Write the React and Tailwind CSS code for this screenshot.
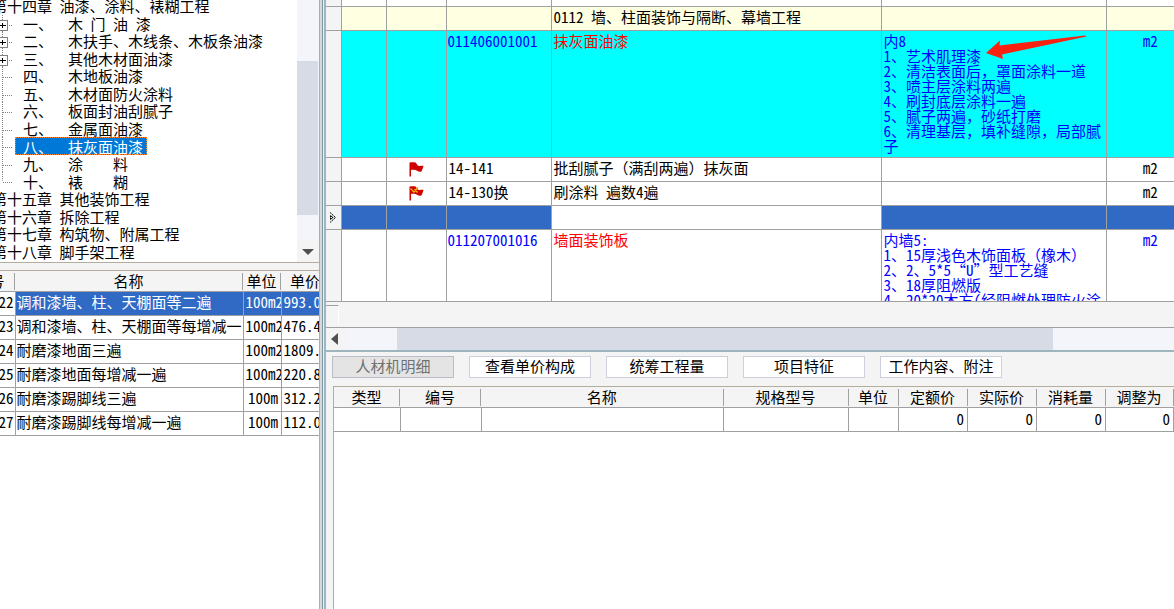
import React from "react";

const tree = [
  { chapter: true, text: "第十四章 油漆、涂料、裱糊工程" },
  { plus: true, text: "一、  木 门 油 漆" },
  { plus: true, text: "二、  木扶手、木线条、木板条油漆" },
  { plus: true, text: "三、  其他木材面油漆" },
  { text: "四、  木地板油漆" },
  { text: "五、  木材面防火涂料" },
  { text: "六、  板面封油刮腻子" },
  { text: "七、  金属面油漆" },
  { selected: true, text: "八、  抹灰面油漆" },
  { text: "九、  涂    料" },
  { last: true, text: "十、  裱    糊" },
  { chapter: true, text: "第十五章 其他装饰工程" },
  { chapter: true, text: "第十六章 拆除工程" },
  { chapter: true, text: "第十七章 构筑物、附属工程" },
  { chapter: true, text: "第十八章 脚手架工程" },
];

const quotas = [
  ["22", "调和漆墙、柱、天棚面等二遍", "100m2", "993.0"],
  ["23", "调和漆墙、柱、天棚面等每增减一", "100m2", "476.4"],
  ["24", "耐磨漆地面三遍", "100m2", "1809."],
  ["25", "耐磨漆地面每增减一遍", "100m2", "220.8"],
  ["26", "耐磨漆踢脚线三遍", "100m", "312.2"],
  ["27", "耐磨漆踢脚线每增减一遍", "100m", "112.0"],
];

const innerWallFeatures = [
  "内8",
  "1、艺术肌理漆",
  "2、清洁表面后，罩面涂料一道",
  "3、喷主层涂料两遍",
  "4、刷封底层涂料一遍",
  "5、腻子两遍，砂纸打磨",
  "6、清理基层，填补缝隙，局部腻子",
];

const panelFeatures = [
  "内墙5:",
  "1、15厚浅色木饰面板（橡木）",
  "2、2、5*5“U”型工艺缝",
  "3、18厚阻燃版",
  "4、20*20木方(经阻燃处理防火涂",
];

const tabs = ["人材机明细", "查看单价构成", "统筹工程量", "项目特征", "工作内容、附注"];

const detailColumns = [
  ["类型", "w-[66px]"],
  ["编号", "w-[81px]"],
  ["名称", ""],
  ["规格型号", "w-[125px]"],
  ["单位", "w-[50px]"],
  ["定额价", "w-[69px]"],
  ["实际价", "w-[69px]"],
  ["消耗量", "w-[69px]"],
  ["调整为", "w-[68px]"],
];

// ASCII runs use the font's half-width glyphs; CJK punctuation stays full width.
function Text({ value }) {
  return value.split(/([\x20-\x7e]+)/).map((part, i) =>
    i % 2 === 1 ? (
      <span key={i} className="[font-feature-settings:'hwid']">
        {part}
      </span>
    ) : (
      part
    ),
  );
}

function TreeRow({ item }) {
  if (item.chapter) {
    return (
      <li className="-ml-2 flex items-center whitespace-pre">
        <button type="button">
          <Text value={item.text} />
        </button>
      </li>
    );
  }
  return (
    <li className="flex items-stretch whitespace-pre">
      <span className="relative w-[15px] shrink-0">
        <svg className="absolute inset-0 h-full w-full" aria-hidden="true">
          <line x1="2.5" y1="0" x2="2.5" y2={item.last ? "50%" : "100%"} stroke="#808080" strokeDasharray="1 1" />
          <line x1="3" y1="10.5" x2="13" y2="10.5" stroke="#808080" strokeDasharray="1 1" />
        </svg>
        {item.plus && (
          <svg className="absolute top-[5px] left-[-2px] h-[11px] w-[10px]" viewBox="0 0 10 11" aria-hidden="true">
            <rect x="-0.5" y="0.5" width="10" height="10" fill="#fff" stroke="#808080" />
            <path d="M2 5.5h6M4.5 3v5" stroke="#000" fill="none" />
          </svg>
        )}
      </span>
      <button
        type="button"
        className={
          item.selected
            ? "flex items-center bg-[#0078d7] pr-[4px] pl-2 text-white outline-1 -outline-offset-1 outline-dotted outline-[#ff8728]"
            : "flex items-center pl-2"
        }
      >
        <span>
          <Text value={item.text} />
        </span>
      </button>
    </li>
  );
}

function Flag({ changed }) {
  return (
    <svg className="mx-auto mt-px h-[15px] w-[15px]" viewBox="0 0 15 15" aria-hidden="true">
      <path d="M.5.500C3 0 5 0 6.500.500 8 1.500 8 3.500 10 4 11.500 4.300 13 3.600 14.500 4 14 6 13 8 12.500 9.500 11 10 9.500 9.800 8.500 9 7 7.800 4 7.200 2 8V14.500H.5Z" fill="#d00000" />
      {changed && <path d="M1.500 2.500 5 6 9 1.500M5.500 3 8.500 6.500" stroke="#ffb400" strokeWidth="1.3" fill="none" />}
    </svg>
  );
}

const line = "border-r border-b border-[#a0a0a0]";
const cell = "border-r border-b border-[#a0a0a0] pr-[2px] pb-[3px] pl-[2px]";
const codeCell = "border-r border-b border-[#a0a0a0] pt-[2px] pl-[1px]";
const gutter = "border-r border-b border-[#a0a0a0] bg-[#f4f4f4]";

function BillTable() {
  return (
    <table className="w-full table-fixed border-collapse text-left">
      <colgroup>
        <col className="w-[15px]" />
        <col className="w-[45px]" />
        <col className="w-[60px]" />
        <col className="w-[105px]" />
        <col />
        <col className="w-[225px]" />
        <col className="w-[68px]" />
      </colgroup>
      <tbody>
        <tr className="h-[6px]">
          <td className={gutter} />
          <td className={line} />
          <td className={line} />
          <td className={line} />
          <td className={line} />
          <td className={line} />
          <td className="border-b border-[#a0a0a0]" />
        </tr>
        <tr className="h-[24px] bg-[#ffffe1]">
          <td className={gutter} />
          <td className={line} />
          <td className={line} />
          <td className={line} />
          <td className={cell}>
            <Text value="0112 墙、柱面装饰与隔断、幕墙工程" />
          </td>
          <td className={line} />
          <td className="border-b border-[#a0a0a0]" />
        </tr>
        <tr className="h-[127px] bg-[#00ffff] align-top text-[#0000ff]">
          <td className={gutter} />
          <td className={line} />
          <td className={line} />
          <td className={codeCell}>
            <Text value="011406001001" />
          </td>
          <td className="border-r border-b border-[#a0a0a0] pt-[2px] pl-[2px] text-[#ff0000]">抹灰面油漆</td>
          <td className="relative border-r border-b border-[#a0a0a0] pt-[2px] pl-[2px]">
            {innerWallFeatures.map((feature) => (
              <p key={feature}>
                <Text value={feature} />
              </p>
            ))}
            <svg className="absolute top-[4px] left-[104px] h-[25px] w-[101px]" viewBox="0 0 101 25" aria-hidden="true">
              <path d="M0 18 14 5.500 13.500 10.500 99 .5 100.500 1.500 16 19.500 17 24Z" fill="#fb2110" />
            </svg>
          </td>
          <td className="border-b border-[#a0a0a0] pt-[2px] pl-[20px] text-center">
            <Text value="m2" />
          </td>
        </tr>
        <tr className="h-[24px]">
          <td className={gutter} />
          <td className={line} />
          <td className={line}>
            <Flag />
          </td>
          <td className={cell}>
            <Text value="14-141" />
          </td>
          <td className={cell}>批刮腻子（满刮两遍）抹灰面</td>
          <td className={line} />
          <td className="border-b border-[#a0a0a0] pb-[3px] pl-[20px] text-center">
            <Text value="m2" />
          </td>
        </tr>
        <tr className="h-[24px]">
          <td className={gutter} />
          <td className={line} />
          <td className={line}>
            <Flag changed />
          </td>
          <td className={cell}>
            <Text value="14-130换" />
          </td>
          <td className={cell}>
            <Text value="刷涂料 遍数4遍" />
          </td>
          <td className={line} />
          <td className="border-b border-[#a0a0a0] pb-[3px] pl-[20px] text-center">
            <Text value="m2" />
          </td>
        </tr>
        <tr className="h-[24px] bg-[#316ac5]">
          <td className={gutter}>
            <svg className="ml-[3px] h-[11px] w-[7px]" viewBox="0 0 7 11" aria-hidden="true">
              <path d="M1 .5 6.500 5.500 1 10.500" stroke="#000" fill="none" strokeDasharray="2 .6" />
              <path d="M1 3 4.500 5.500 1 8Z" fill="#000" />
              <path d="M1.500 5.500h1.500" stroke="#fff" />
            </svg>
          </td>
          <td className={line} />
          <td className={line} />
          <td className={line} />
          <td className="border-r border-b border-[#a0a0a0] bg-white" />
          <td className={line} />
          <td className="border-b border-[#a0a0a0]" />
        </tr>
        <tr className="h-[72px] align-top text-[#0000ff]">
          <td className={gutter} />
          <td className={line} />
          <td className={line} />
          <td className={codeCell}>
            <Text value="011207001016" />
          </td>
          <td className="border-r border-b border-[#a0a0a0] pt-[2px] pl-[2px] text-[#ff0000]">墙面装饰板</td>
          <td className="border-r border-b border-[#a0a0a0] pt-[2px] pl-[2px]">
            <div className="h-[69px] overflow-hidden whitespace-nowrap">
              {panelFeatures.map((feature) => (
                <p key={feature}>
                  <Text value={feature} />
                </p>
              ))}
            </div>
          </td>
          <td className="border-b border-[#a0a0a0] pt-[2px] pl-[20px] text-center">
            <Text value="m2" />
          </td>
        </tr>
      </tbody>
    </table>
  );
}

const headLabel = "mt-[2px] h-[17px] border-r border-[#a0a0a0]";

export default function App() {
  return (
    <div
      lang="zh-CN"
      className="flex min-h-screen overflow-hidden bg-[#f4f4f4] font-['Noto_Sans_CJK_SC',sans-serif] text-[15px] leading-[15px] text-black"
    >
      <aside className="flex w-[320px] shrink-0 flex-col border-r border-[#b5ad9c]">
        <nav className="flex h-[263px] overflow-hidden border-b border-[#b5ad9c] bg-white">
          <ul className="-mt-[3px] grid h-[263px] flex-1 auto-rows-fr">
            {tree.map((item) => (
              <TreeRow key={item.text} item={item} />
            ))}
          </ul>
          <div className="flex w-[22px] flex-col bg-[#f3f5fa]">
            <div className="mt-[61px] mr-px h-[154px] bg-[#d7dbe5]" />
            <div className="mt-auto flex h-[21px] items-center justify-center bg-[#f4f4f4]">
              <svg className="h-[6px] w-[12px]" viewBox="0 0 12 6" aria-hidden="true">
                <path d="M0 0h12L6 6z" fill="#505050" />
              </svg>
            </div>
          </div>
        </nav>
        <div className="mt-[7px] flex-1 overflow-hidden border-t border-[#b5ad9c] bg-white">
          <table className="-ml-6 w-[344px] table-fixed border-collapse whitespace-nowrap">
            <colgroup>
              <col className="w-[39px]" />
              <col />
              <col className="w-[38px]" />
              <col className="w-[39px]" />
            </colgroup>
            <thead className="bg-[#f4f4f4]">
              <tr className="h-[20px] border-b border-[#a0a0a0]">
                <th className="p-0 font-normal">
                  <div className="mt-[2px] h-[17px] border-r border-[#a0a0a0] pl-[4px]">号</div>
                </th>
                <th className="p-0 font-normal">
                  <div className={headLabel}>名称</div>
                </th>
                <th className="p-0 font-normal">
                  <div className={headLabel}>单位</div>
                </th>
                <th className="p-0 font-normal">
                  <div className="mt-[2px] h-[17px] overflow-hidden pl-[9px] text-left">单价</div>
                </th>
              </tr>
            </thead>
            <tbody>
              {quotas.map(([no, name, unit, price], i) => (
                <tr key={no} className={i === 0 ? "h-[24px] bg-[#316ac5] text-white" : "h-[24px]"}>
                  <td className="border-r border-b border-[#a0a0a0] bg-white pr-px pb-[3px] text-right text-black">
                    <Text value={no} />
                  </td>
                  <td className="overflow-hidden border-r border-b border-[#a0a0a0] pb-[3px] pl-px">{name}</td>
                  <td className="overflow-hidden border-r border-b border-[#a0a0a0] pb-[3px] pl-[2px] text-center">
                    <Text value={unit} />
                  </td>
                  <td className="overflow-hidden border-b border-[#a0a0a0] pb-[3px] pl-[2px]">
                    <Text value={price} />
                  </td>
                </tr>
              ))}
            </tbody>
          </table>
        </div>
      </aside>

      <div className="flex shrink-0">
        <div className="w-[2px] bg-[#d6d9d9]" />
        <div className="w-px bg-[#8a969e]" />
        <div className="w-px bg-[#eceeee]" />
        <div className="w-[2px] bg-[#93b9cd]" />
      </div>

      <main className="flex min-w-0 flex-1 flex-col">
        <section className="border-b-2 border-[#9fb5bd]">
          <div className="bg-white">
            <BillTable />
          </div>
          <div className="flex h-[25px] items-start pt-[3px]">
            <div className="h-[20px] w-[13px] border-t border-r border-t-[#a0a0a0] border-r-white" />
          </div>
          <div className="flex h-[23px] border-t border-[#a0a0a0] bg-[#f3f5fa]">
            <div className="flex w-[21px] items-center bg-[#f4f4f4] pl-[5px]">
              <svg className="h-[12px] w-[7px]" viewBox="0 0 7 12" aria-hidden="true">
                <path d="M7 0v12L0 6z" fill="#505050" />
              </svg>
            </div>
            <div className="ml-[50px] flex-1 bg-[#d7dbe5]" />
            <div className="w-[121px]" />
          </div>
        </section>

        <section className="flex flex-1 flex-col pl-[6px]">
          <div className="flex gap-[15px] pt-[4px] pb-[8px]">
            {tabs.map((tab, i) => (
              <button
                key={tab}
                type="button"
                className={
                  i === 0
                    ? "h-[22px] w-[122px] border border-[#b8bcc4] bg-[#e4e4e4] pb-[2px] text-[#707070]"
                    : "h-[22px] w-[122px] border border-[#ccd0dc] bg-white pb-[2px]"
                }
              >
                {tab}
              </button>
            ))}
          </div>
          <div className="ml-px flex-1 border-t border-l border-[#b5ad9c] bg-white">
            <table className="w-full table-fixed border-collapse">
              <thead className="bg-[#f4f4f4]">
                <tr className="h-[21px] border-b border-[#a0a0a0]">
                  {detailColumns.map(([name, width]) => (
                    <th key={name} className={width + " p-0 font-normal"}>
                      <div className={headLabel}>{name}</div>
                    </th>
                  ))}
                </tr>
              </thead>
              <tbody>
                <tr className="h-[24px]">
                  {detailColumns.map(([name], i) => (
                    <td key={name} className="border-r border-b border-[#a0a0a0] pr-[3px] pb-[3px] text-right">
                      {i > 4 ? <Text value="0" /> : null}
                    </td>
                  ))}
                </tr>
              </tbody>
            </table>
          </div>
        </section>
      </main>
    </div>
  );
}
